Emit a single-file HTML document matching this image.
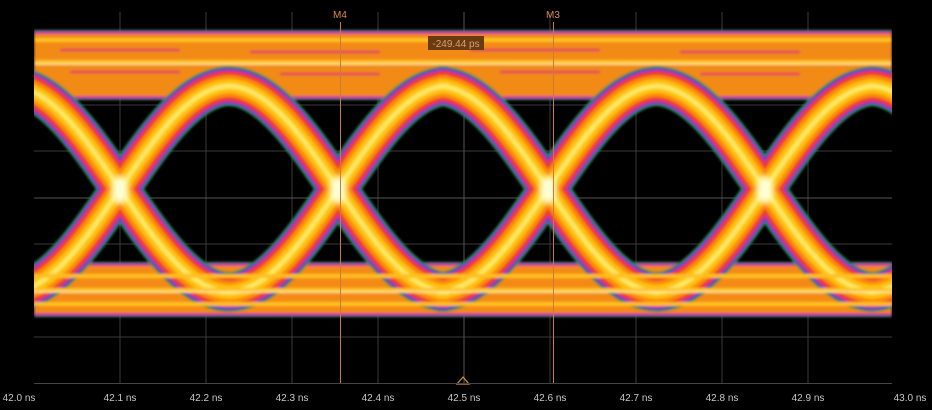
<!DOCTYPE html>
<html><head><style>
html,body{margin:0;padding:0;background:#000;width:932px;height:410px;overflow:hidden}
svg{display:block}
text{font-family:"Liberation Sans",sans-serif}
</style></head><body>
<svg width="932" height="410" viewBox="0 0 932 410">
<defs>
<filter id="b" x="-10%" y="-10%" width="120%" height="120%"><feGaussianBlur stdDeviation="1.2"/></filter>
<filter id="b2"><feGaussianBlur stdDeviation="3"/></filter>
<g id="edges">
  <path d="M-205,292 C-125,292 -65,86 15,86 M-205,86 C-125,86 -65,292 15,292"/>
  <path d="M10,292 C90,292 150,86 230,86 M10,86 C90,86 150,292 230,292"/>
  <path d="M228,292 C308,292 368,86 448,86 M228,86 C308,86 368,292 448,292"/>
  <path d="M438,292 C518,292 578,86 658,86 M438,86 C518,86 578,292 658,292"/>
  <path d="M655,292 C735,292 795,86 875,86 M655,86 C735,86 795,292 875,292"/>
  <path d="M870,292 C950,292 1010,86 1090,86 M870,86 C950,86 1010,292 1090,292"/>
</g>
<clipPath id="c"><rect x="34" y="12" width="858" height="371"/></clipPath>
</defs>
<g stroke="#3a3a3a" stroke-width="1">
  <path d="M120,12V383M206,12V383M292,12V383M378,12V383M550,12V383M636,12V383M722,12V383M808,12V383"/>
  <path d="M34,58H892M34,105H892M34,151H892M34,244H892M34,290H892M34,337H892"/>
  <path d="M34,198H892M464,12V383" stroke="#555"/>
</g>
<g clip-path="url(#c)" filter="url(#b)">
  <rect x="34" y="30" width="858" height="70" fill="#2f8a3a"/>
  <rect x="34" y="31" width="858" height="68" fill="#6a3bd0"/>
  <rect x="34" y="32" width="858" height="66" fill="#d8308c"/>
  <rect x="34" y="34" width="858" height="62" fill="#f28a18"/>
  <rect x="34" y="262" width="858" height="55" fill="#2f8a3a"/>
  <rect x="34" y="263" width="858" height="53" fill="#6a3bd0"/>
  <rect x="34" y="264" width="858" height="51" fill="#d8308c"/>
  <rect x="34" y="266" width="858" height="47" fill="#f48a18"/>
  <g fill="none">
    <use href="#edges" stroke="#2f8a3a" stroke-width="40"/>
    <use href="#edges" stroke="#4a3bd0" stroke-width="36"/>
    <use href="#edges" stroke="#d8308c" stroke-width="32"/>
    <use href="#edges" stroke="#ee3a24" stroke-width="28"/>
    <use href="#edges" stroke="#fb8a10" stroke-width="22"/>
    <use href="#edges" stroke="#ffc010" stroke-width="14"/>
    <use href="#edges" stroke="#ffe860" stroke-width="5"/>
  </g>
  <g stroke="#e0306a" stroke-width="3" fill="none" opacity="0.7">
    <path d="M60,50 H180 M250,52 H380 M470,50 H600 M680,52 H800 M70,72 H180 M280,74 H380 M500,72 H600 M700,74 H800"/>
  </g>
  <g stroke="#ffc020" stroke-width="4" fill="none">
    <path d="M34,40H892M34,62H892M34,276H892M34,290H892M34,304H892"/>
  </g>
  <g stroke="#fff1a0" stroke-width="1.5" fill="none">
    <path d="M34,64H892M34,292H892"/>
  </g>
  <g fill="#ffffd8" filter="url(#b2)">
    <ellipse cx="120" cy="190" rx="8" ry="14"/><ellipse cx="338" cy="190" rx="8" ry="14"/>
    <ellipse cx="548" cy="190" rx="8" ry="14"/><ellipse cx="765" cy="190" rx="8" ry="14"/>
  </g>
</g>
<rect x="340" y="22" width="1" height="361" fill="#c87a40"/>
<rect x="553" y="22" width="1" height="361" fill="#c87a40"/>
<text x="340" y="18" fill="#d88a50" font-size="10" text-anchor="middle">M4</text>
<text x="553" y="18" fill="#d88a50" font-size="10" text-anchor="middle">M3</text>
<rect x="428" y="36" width="56" height="14" fill="#6a3a10"/>
<text x="456" y="47" fill="#d8a070" font-size="10" text-anchor="middle">-249.44 ps</text>
<path d="M457,384 L463,377 L469,384Z" fill="none" stroke="#d89040" stroke-width="1.2"/>
<path d="M34,383.5H892" stroke="#444"/>
<g fill="#c8c8c8" font-size="10" text-anchor="middle">
  <text x="19" y="401">42.0 ns</text><text x="120" y="401">42.1 ns</text><text x="206" y="401">42.2 ns</text>
  <text x="292" y="401">42.3 ns</text><text x="378" y="401">42.4 ns</text><text x="464" y="401">42.5 ns</text>
  <text x="550" y="401">42.6 ns</text><text x="636" y="401">42.7 ns</text><text x="722" y="401">42.8 ns</text>
  <text x="808" y="401">42.9 ns</text><text x="910" y="401">43.0 ns</text>
</g>
</svg>
</body></html>
